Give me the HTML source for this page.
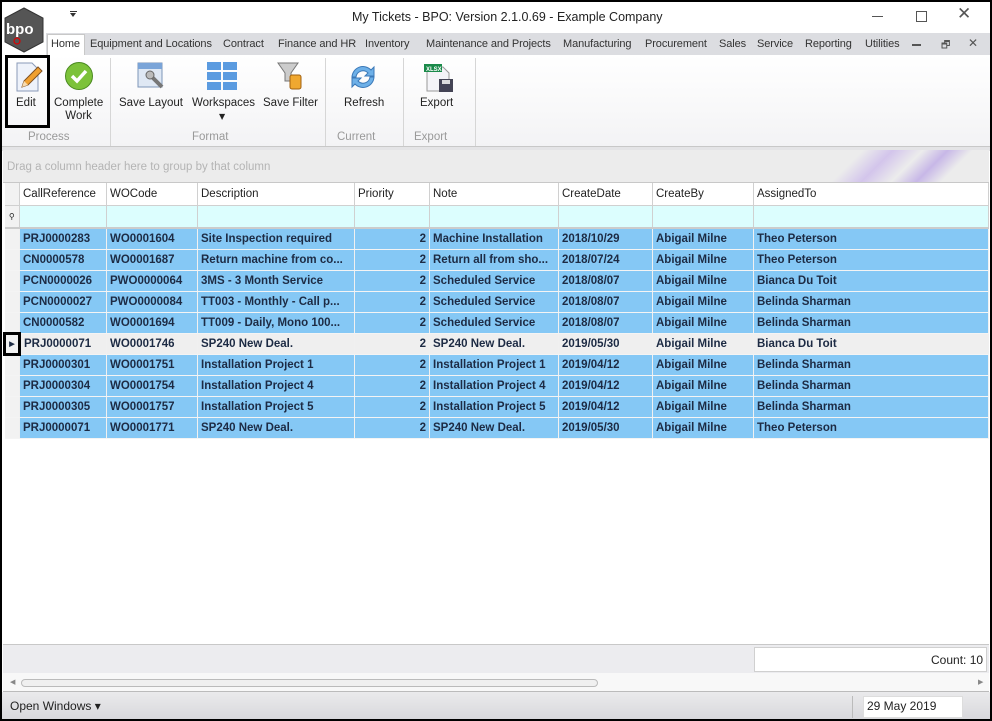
<!DOCTYPE html>
<html><head><meta charset="utf-8"><style>
*{box-sizing:border-box;margin:0;padding:0}
body{width:992px;height:721px;overflow:hidden;background:#000;font-family:"DejaVu Sans","Liberation Sans",sans-serif;font-size:11px;color:#222;position:relative}
.a{position:absolute}
#win{left:2px;top:2px;width:988px;height:717px;background:#fff;overflow:hidden}
.tab{position:absolute;top:36px;font-size:11px;color:#333;font-family:"Liberation Sans",sans-serif;letter-spacing:-0.1px}
.rl{position:absolute;font-family:"Liberation Sans",sans-serif;font-size:11.5px;color:#222;text-align:center}
.gl{position:absolute;top:129px;font-family:"Liberation Sans",sans-serif;font-size:11.5px;color:#999}
.sep{position:absolute;top:56px;width:1px;height:88px;background:#d6d6d6}
table{border-collapse:collapse;position:absolute;left:1px;top:181px;width:986px;table-layout:fixed}
td{height:21px;border-right:1px solid #d0d0d0;border-bottom:1px solid #e8e8e8;padding:0 3px;white-space:nowrap;overflow:hidden;font-family:"Liberation Sans",sans-serif;font-size:11.5px}
tr.h td{background:#fff;color:#222;height:22px;border-bottom:1px solid #d0d0d0;font-size:11.5px}
tr.f td{background:#dcfefe;height:23px;border-bottom:2px solid #ccc}
tr.d td{background:#85c8f5;font-weight:bold;color:#1d2b44;border-bottom:1px solid #f4f4f4;border-right:1px solid #f0f0f0}
tr.s td{background:#efefef}
tr td:first-child{background:#f2f2f2 !important;padding:0}
td.r{text-align:right}
</style></head><body>
<div id="win" class="a">
 <div class="a" style="left:0;top:0;width:988px;height:31px;background:#fff"></div>
 <div class="a" style="left:350px;top:8px;font-family:'Liberation Sans',sans-serif;font-size:12.5px;color:#222">My Tickets - BPO: Version 2.1.0.69 - Example Company</div>
 <div class="a" style="left:68px;top:9px;width:7px;height:1px;background:#333"></div>
 <div class="a" style="left:68px;top:11px;width:0;height:0;border-left:3.5px solid transparent;border-right:3.5px solid transparent;border-top:4px solid #333"></div>
 <div class="a" style="left:870px;top:14px;width:11px;height:1px;background:#555"></div>
 <div class="a" style="left:914px;top:9px;width:11px;height:11px;border:1px solid #555"></div>
 <div class="a" style="left:955px;top:2px;font-size:17px;color:#555;font-family:'Liberation Sans'">✕</div>
 <svg class="a" style="left:0;top:4px" width="44" height="48"><polygon points="22,2 41,12 41,36 22,46 3,36 3,12" fill="#555" stroke="#333"/><text x="4" y="28" font-family="Liberation Sans" font-weight="bold" font-size="15" fill="#fff">bpo</text><circle cx="15" cy="35" r="3" fill="none" stroke="#d00" stroke-width="1.2"/></svg>
 <div class="a" style="left:44px;top:31px;width:944px;height:22px;background:#dcdde1"></div>
 <div class="a" style="left:45px;top:32px;width:38px;height:22px;background:#fff;border:1px solid #c8c8c8;border-bottom:none"></div>
 <div class="tab" style="left:49px">Home</div>
 <div class="tab" style="left:88px">Equipment and Locations</div>
 <div class="tab" style="left:221px">Contract</div>
 <div class="tab" style="left:276px">Finance and HR</div>
 <div class="tab" style="left:363px">Inventory</div>
 <div class="tab" style="left:424px">Maintenance and Projects</div>
 <div class="tab" style="left:561px">Manufacturing</div>
 <div class="tab" style="left:643px">Procurement</div>
 <div class="tab" style="left:717px">Sales</div>
 <div class="tab" style="left:755px">Service</div>
 <div class="tab" style="left:803px">Reporting</div>
 <div class="tab" style="left:863px">Utilities</div>
 <div class="a" style="left:910px;top:42px;width:9px;height:2px;background:#555"></div>
 <div class="a" style="left:939px;top:36px;font-size:10px;color:#555">🗗</div>
 <div class="a" style="left:966px;top:34px;font-size:12px;font-weight:bold;color:#555">✕</div>
 <div class="a" style="left:0;top:53px;width:988px;height:92px;background:linear-gradient(#fff,#f3f3f5);border-bottom:1px solid #c8c8c8"></div>
 <div class="a" style="left:0;top:145px;width:988px;height:4px;background:#e4e4e6"></div>
 <div class="sep" style="left:108px"></div><div class="sep" style="left:323px"></div><div class="sep" style="left:401px"></div><div class="sep" style="left:473px"></div>
 <div class="a" style="left:3px;top:53px;width:45px;height:73px;border:3px solid #000"></div>
 <svg class="a" style="left:11px;top:59px" width="30" height="32"><path d="M4 2h15l6 6v22H4z" fill="#eef2fa" stroke="#8a9ab8"/><path d="M9 26l2-6 14-14 4 4-14 14z" fill="#f0a030" stroke="#805020"/><path d="M9 26l2-6 4 4z" fill="#f8dcb0"/></svg>
 <div class="rl" style="left:14px;top:95px">Edit</div>
 <svg class="a" style="left:62px;top:59px" width="30" height="30"><circle cx="15" cy="15" r="13.5" fill="#7cc23a" stroke="#4a8a20"/><path d="M8 15l5 5 9-10" fill="none" stroke="#fff" stroke-width="3.5"/></svg>
 <div class="rl" style="left:52px;top:95px;line-height:13px">Complete<br>Work</div>
 <svg class="a" style="left:135px;top:59px" width="30" height="32"><rect x="1" y="2" width="24" height="24" fill="#dfe8f4" stroke="#7d96b8"/><rect x="1" y="2" width="24" height="6" fill="#7aa4d8"/><path d="M13 14l12 12" stroke="#777" stroke-width="4"/><circle cx="13" cy="14" r="4" fill="#bbb" stroke="#666"/></svg>
 <div class="rl" style="left:117px;top:95px">Save Layout</div>
 <svg class="a" style="left:205px;top:59px" width="30" height="30"><g fill="#5b9be0"><rect x="0" y="1" width="14" height="8"/><rect x="16" y="1" width="14" height="8"/><rect x="0" y="11" width="14" height="8"/><rect x="16" y="11" width="14" height="8"/><rect x="0" y="21" width="14" height="8"/><rect x="16" y="21" width="14" height="8"/></g></svg>
 <div class="rl" style="left:190px;top:95px">Workspaces</div>
 <div class="a" style="left:217px;top:110px;font-size:8px">▼</div>
 <svg class="a" style="left:274px;top:58px" width="28" height="32"><path d="M2 3h20l-7 10v8h-6v-8z" fill="#ccc" stroke="#777"/><rect x="14" y="15" width="11" height="14" rx="2" fill="#f0a830" stroke="#a06010"/></svg>
 <div class="rl" style="left:261px;top:95px">Save Filter</div>
 <svg class="a" style="left:345px;top:60px" width="32" height="30"><path d="M5 15a11 11 0 0 1 19-7l3-3v9h-9l3-3a7 7 0 0 0-12 4z" fill="#6db0e8" stroke="#3b79b8"/><path d="M27 15a11 11 0 0 1-19 7l-3 3v-9h9l-3 3a7 7 0 0 0 12-4z" fill="#6db0e8" stroke="#3b79b8"/></svg>
 <div class="rl" style="left:342px;top:95px">Refresh</div>
 <svg class="a" style="left:419px;top:59px" width="34" height="32"><path d="M6 6h16l6 6v18H6z" fill="#f4f4f8" stroke="#999"/><rect x="3" y="3" width="18" height="8" fill="#1a8a4a"/><text x="5" y="10" font-size="6" font-weight="bold" fill="#fff" font-family="Liberation Sans">XLSX</text><rect x="18" y="18" width="14" height="13" fill="#445" /><rect x="21" y="19" width="8" height="4" fill="#ddd"/></svg>
 <div class="rl" style="left:418px;top:95px">Export</div>
 <div class="gl" style="left:26px">Process</div>
 <div class="gl" style="left:190px">Format</div>
 <div class="gl" style="left:335px">Current</div>
 <div class="gl" style="left:412px">Export</div>
 <div class="a" style="left:1px;top:148px;width:986px;height:33px;background:#ececec;border-bottom:1px solid #c8c8c8;overflow:hidden">
  <div class="a" style="left:840px;top:-20px;width:60px;height:80px;background:linear-gradient(90deg,rgba(210,195,235,0),rgba(200,180,235,.7),rgba(210,195,235,0));transform:skewX(-45deg)"></div>
  <div class="a" style="left:900px;top:-20px;width:50px;height:80px;background:linear-gradient(90deg,rgba(210,195,235,0),rgba(190,170,230,.8),rgba(210,195,235,0));transform:skewX(-45deg)"></div>
 </div>
 <div class="a" style="left:5px;top:159px;font-family:'Liberation Sans';font-size:11.5px;color:#b4b4b4">Drag a column header here to group by that column</div>
 <table>
 <colgroup><col style="width:15px"><col style="width:87px"><col style="width:91px"><col style="width:157px"><col style="width:75px"><col style="width:129px"><col style="width:94px"><col style="width:101px"><col></colgroup>
 <tr class="h"><td></td><td>CallReference</td><td>WOCode</td><td>Description</td><td>Priority</td><td>Note</td><td>CreateDate</td><td>CreateBy</td><td>AssignedTo</td></tr>
 <tr class="f"><td style="font-size:8px;text-align:center">⚲</td><td></td><td></td><td></td><td></td><td></td><td></td><td></td><td></td></tr>
 <tr class="d"><td></td><td>PRJ0000283</td><td>WO0001604</td><td>Site Inspection required</td><td class="r">2</td><td>Machine Installation</td><td>2018/10/29</td><td>Abigail Milne</td><td>Theo Peterson</td></tr>
 <tr class="d"><td></td><td>CN0000578</td><td>WO0001687</td><td>Return machine from co...</td><td class="r">2</td><td>Return all from sho...</td><td>2018/07/24</td><td>Abigail Milne</td><td>Theo Peterson</td></tr>
 <tr class="d"><td></td><td>PCN0000026</td><td>PWO0000064</td><td>3MS - 3 Month Service</td><td class="r">2</td><td>Scheduled Service</td><td>2018/08/07</td><td>Abigail Milne</td><td>Bianca Du Toit</td></tr>
 <tr class="d"><td></td><td>PCN0000027</td><td>PWO0000084</td><td>TT003 -  Monthly - Call p...</td><td class="r">2</td><td>Scheduled Service</td><td>2018/08/07</td><td>Abigail Milne</td><td>Belinda Sharman</td></tr>
 <tr class="d"><td></td><td>CN0000582</td><td>WO0001694</td><td>TT009 - Daily, Mono 100...</td><td class="r">2</td><td>Scheduled Service</td><td>2018/08/07</td><td>Abigail Milne</td><td>Belinda Sharman</td></tr>
 <tr class="d s"><td style="border:3px solid #000;font-size:7px;text-align:center">▶</td><td>PRJ0000071</td><td>WO0001746</td><td>SP240 New Deal.</td><td class="r">2</td><td>SP240 New Deal.</td><td>2019/05/30</td><td>Abigail Milne</td><td>Bianca Du Toit</td></tr>
 <tr class="d"><td></td><td>PRJ0000301</td><td>WO0001751</td><td>Installation Project 1</td><td class="r">2</td><td>Installation Project 1</td><td>2019/04/12</td><td>Abigail Milne</td><td>Belinda Sharman</td></tr>
 <tr class="d"><td></td><td>PRJ0000304</td><td>WO0001754</td><td>Installation Project 4</td><td class="r">2</td><td>Installation Project 4</td><td>2019/04/12</td><td>Abigail Milne</td><td>Belinda Sharman</td></tr>
 <tr class="d"><td></td><td>PRJ0000305</td><td>WO0001757</td><td>Installation Project 5</td><td class="r">2</td><td>Installation Project 5</td><td>2019/04/12</td><td>Abigail Milne</td><td>Belinda Sharman</td></tr>
 <tr class="d"><td></td><td>PRJ0000071</td><td>WO0001771</td><td>SP240 New Deal.</td><td class="r">2</td><td>SP240 New Deal.</td><td>2019/05/30</td><td>Abigail Milne</td><td>Theo Peterson</td></tr>
 </table>
 <div class="a" style="left:1px;top:642px;width:986px;height:29px;background:#ececef;border-top:1px solid #c8c8c8"></div>
 <div class="a" style="left:752px;top:645px;width:233px;height:25px;background:#fff;border:1px solid #d0d0d0"></div>
 <div class="a" style="left:929px;top:651px;font-family:'Liberation Sans';font-size:12px;color:#222">Count: 10</div>
 <div class="a" style="left:1px;top:671px;width:986px;height:19px;background:#f8f8f8;border-bottom:1px solid #bbb"></div>
 <div class="a" style="left:19px;top:677px;width:577px;height:8px;border:1px solid #bbb;border-radius:4px;background:#f0f0f0"></div>
 <div class="a" style="left:8px;top:676px;font-size:7px;color:#888">◀</div>
 <div class="a" style="left:976px;top:676px;font-size:7px;color:#888">▶</div>
 <div class="a" style="left:0;top:690px;width:988px;height:27px;background:linear-gradient(#eaeaec,#d8d8dc)"></div>
 <div class="a" style="left:8px;top:697px;font-family:'Liberation Sans';font-size:12px;color:#222">Open Windows ▾</div>
 <div class="a" style="left:850px;top:694px;width:1px;height:22px;background:#bbb"></div>
 <div class="a" style="left:861px;top:694px;width:100px;height:22px;background:#fff;border:1px solid #ddd"></div>
 <div class="a" style="left:865px;top:697px;font-family:'Liberation Sans';font-size:12px;color:#222">29 May 2019</div>
</div>
</body></html>
